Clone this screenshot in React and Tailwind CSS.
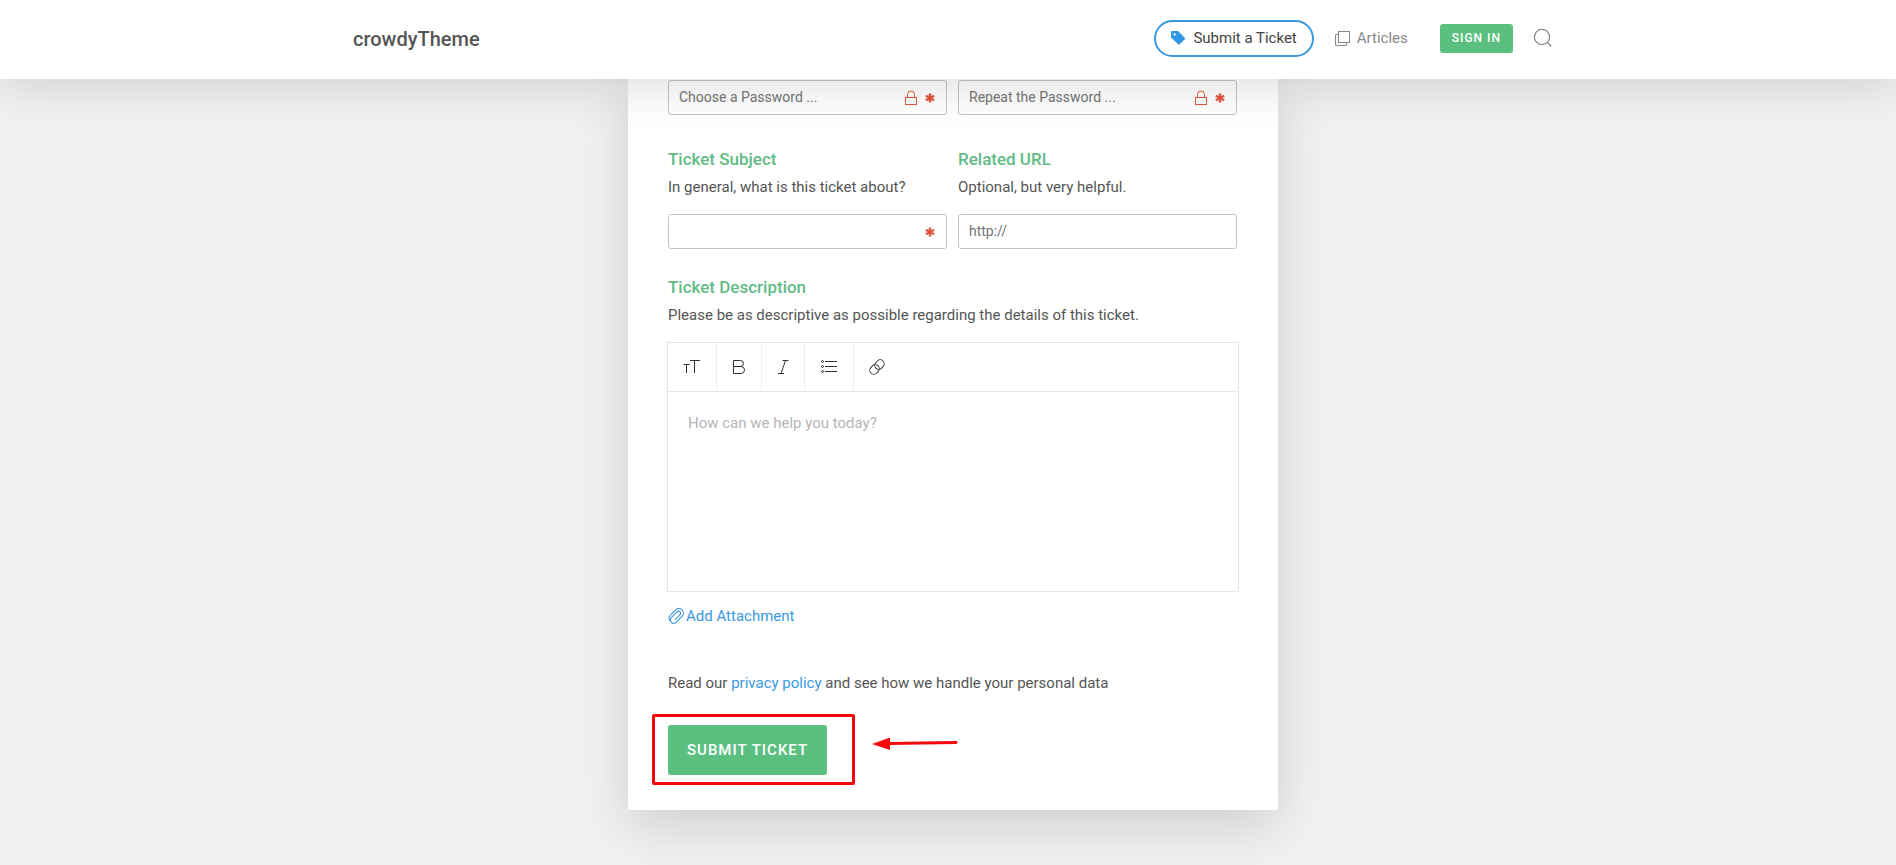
import { useState } from "react";

const inputClass =
  "w-full h-[35px] rounded-[3px] border border-[#c4c4c4] bg-transparent px-2.5 pb-0.5 text-sm text-[#555] placeholder:text-[#757575] outline-none focus:border-[#3a99e0]";

function Icon({ size = 20, className = "", children }) {
  return (
    <svg
      width={size}
      height={size}
      viewBox="0 0 20 20"
      fill="none"
      stroke="currentColor"
      className={`shrink-0 ${className}`}
      aria-hidden="true"
    >
      {children}
    </svg>
  );
}

function TagIcon() {
  return (
    <svg width="14" height="14" viewBox="0 0 14 14" className="shrink-0 text-[#2f97e6]" aria-hidden="true">
      <path
        fill="currentColor"
        fillRule="evenodd"
        d="M0 0.6Q0 0 .6 0H7l7 7a.7.7 0 0 1 0 .9L8.4 13.6a.7.7 0 0 1-.9 0L0 6.4ZM3.6 2.3a1.1 1.1 0 1 0 .01 0Z"
      />
    </svg>
  );
}

function ArticlesIcon() {
  return (
    <svg width="16" height="16" viewBox="0 0 16 16" fill="none" stroke="currentColor" className="shrink-0" aria-hidden="true">
      <rect x="4.5" y="1.5" width="11" height="11" />
      <path d="M4.5 4.5H1.5v11h11v-3" />
    </svg>
  );
}

function SearchIcon() {
  return (
    <Icon>
      <circle cx="9" cy="9" r="7.6" strokeWidth="1.3" />
      <path d="M14.3 14.3l4 4" strokeWidth="1.3" />
    </Icon>
  );
}

function LockIcon() {
  return (
    <svg width="14" height="16" viewBox="0 0 14 16" fill="none" stroke="currentColor" className="shrink-0" aria-hidden="true">
      <rect x="1.5" y="7.5" width="11" height="7" />
      <path d="M3.5 7.5V4.5a3.5 3.5 0 0 1 7 0v3" />
    </svg>
  );
}

function AsteriskIcon() {
  return (
    <svg width="10" height="10" viewBox="0 0 10 10" stroke="currentColor" strokeWidth="2.4" className="shrink-0" aria-hidden="true">
      <path d="M5 0.4v9.2M.9 2.7l8.2 4.6M.9 7.3l8.2-4.6" />
    </svg>
  );
}

function PaperclipIcon() {
  return (
    <Icon size={18}>
      <g transform="rotate(-45 10 10)" strokeWidth="1.2">
        <path d="M6 5h8.500a5 5 0 0 1 0 10H5a3.700 3.700 0 0 1 0-7.400h9a2.300 2.300 0 0 1 0 4.600H6.500" />
        <path d="M6 5a5 5 0 0 0-4.700 4.500" />
      </g>
    </Icon>
  );
}

function Field({ id, type = "text", label, placeholder, lock, required }) {
  return (
    <div className="relative">
      <input
        id={id}
        type={type}
        aria-label={label}
        placeholder={placeholder}
        required={required}
        className={inputClass}
      />
      <span className="pointer-events-none absolute inset-y-0 right-3 flex items-center gap-[7px] text-[#e0583a]">
        {lock && <LockIcon />}
        {required && <AsteriskIcon />}
      </span>
    </div>
  );
}

function FieldHeading({ htmlFor, title, hint }) {
  return (
    <div className="mb-[13px]">
      <label htmlFor={htmlFor} className="block text-[17px] leading-7 font-medium text-[#61bb85]">
        {title}
      </label>
      <p className="text-[15px] leading-7">{hint}</p>
    </div>
  );
}

const tools = [
  {
    name: "Text size",
    width: "w-[49px]",
    icon: <path d="M8 3.5h10M12.5 3.5V16M1.5 7.5h6M4.5 7.5V16" />,
  },
  {
    name: "Bold",
    width: "w-[45px]",
    icon: <path d="M4.5 3.5h7a3 3 0 0 1 0 6h-7zM4.5 9.5h7.5a3.5 3.5 0 0 1 0 7H4.5z" />,
  },
  {
    name: "Italic",
    width: "w-[43px]",
    icon: <path d="M9.5 3.5h6M5 16.5h6M12.5 3.5L8 16.5" />,
  },
  {
    name: "List",
    width: "w-[49px]",
    icon: (
      <>
        <path d="M6 4.5h12M6 9.5h12M6 14.5h12" />
        <circle cx="3.5" cy="4.5" r="1" />
        <circle cx="3.5" cy="9.5" r="1" />
        <circle cx="3.5" cy="14.5" r="1" />
      </>
    ),
  },
  {
    name: "Link",
    width: "w-[45px]",
    icon: (
      <g transform="rotate(-45 10 10)">
        <rect x="1.5" y="6" width="10" height="8" rx="4" />
        <rect x="8.5" y="6" width="10" height="8" rx="4" />
      </g>
    ),
  },
];

function Editor() {
  return (
    <div className="-mr-0.5 -ml-px border border-[#e6e6e6]">
      <div className="flex h-[49px] border-b border-[#e6e6e6] text-[#333]">
        {tools.map((tool) => (
          <button
            key={tool.name}
            type="button"
            aria-label={tool.name}
            className={`flex items-center justify-center border-r border-[#f0f0f0] pb-px last:border-r-0 hover:bg-gray-50 ${tool.width}`}
          >
            <Icon>{tool.icon}</Icon>
          </button>
        ))}
      </div>
      <textarea
        id="description"
        placeholder="How can we help you today?"
        className="block h-[199px] w-full resize-none px-5 py-[17px] text-[15px] leading-7 outline-none placeholder:text-[#b5b5b5]"
      />
    </div>
  );
}

function Header() {
  return (
    <header className="relative z-10 bg-white pl-2.5 shadow-[0_5px_50px_rgba(0,0,0,0.15)]">
      <div className="mx-auto flex h-[79px] max-w-[1200px] items-center justify-between">
        <a href="#" className="pb-0.5 text-xl font-medium text-[#555]">
          crowdyTheme
        </a>
        <nav className="flex items-center pb-[3px] text-[15px]">
          <a
            href="#submit"
            className="flex h-[37px] items-center gap-2 rounded-full border-2 border-[#3a99e0] px-[15px] text-[#444]"
          >
            <TagIcon />
            Submit a Ticket
          </a>
          <a href="#articles" className="ml-5 flex items-center gap-[7px] text-[#888]">
            <ArticlesIcon />
            Articles
          </a>
          <button
            type="button"
            className="ml-8 h-[29px] rounded-[3px] bg-[#5bc07f] px-3 text-xs font-medium tracking-[1px] text-white"
          >
            SIGN IN
          </button>
          <button type="button" aria-label="Search" className="ml-5 text-[#888]">
            <SearchIcon />
          </button>
        </nav>
      </div>
    </header>
  );
}

export default function App() {
  const [sent, setSent] = useState(false);

  const handleSubmit = (e) => {
    e.preventDefault();
    setSent(true);
  };

  return (
    <div className="min-h-screen bg-[#f1f1f1] font-[Roboto,sans-serif] text-[#555]">
      <Header />
      <main className="pb-[55px] pl-2.5">
        <form
          onSubmit={handleSubmit}
          noValidate
          className="mx-auto w-full max-w-[650px] bg-white px-10 pb-[35px] shadow-[0_15px_50px_rgba(0,0,0,0.15)]"
        >
          <div className="mr-px grid grid-cols-2 gap-x-[11px] pt-px">
            <Field id="password" type="password" label="Password" placeholder="Choose a Password ..." lock required />
            <Field id="repeat" type="password" label="Repeat password" placeholder="Repeat the Password ..." lock required />
          </div>

          <div className="mt-[30px] mr-px grid grid-cols-2 gap-x-[11px]">
            <div>
              <FieldHeading htmlFor="subject" title="Ticket Subject" hint="In general, what is this ticket about?" />
              <Field id="subject" label="Ticket Subject" required />
            </div>
            <div>
              <FieldHeading htmlFor="url" title="Related URL" hint="Optional, but very helpful." />
              <Field id="url" label="Related URL" placeholder="http://" />
            </div>
          </div>

          <div className="mt-6 mr-px">
            <FieldHeading
              htmlFor="description"
              title="Ticket Description"
              hint="Please be as descriptive as possible regarding the details of this ticket."
            />
            <Editor />
          </div>

          <button type="button" className="mt-3 -ml-px flex items-center gap-px text-[15px] leading-6 text-[#3a99e0]">
            <PaperclipIcon />
            Add Attachment
          </button>

          <p className="mt-[43px] text-[15px] leading-6">
            Read our{" "}
            <a href="#privacy" className="text-[#3a99e0]">
              privacy policy
            </a>{" "}
            and see how we handle your personal data
          </p>

          <div className="relative mt-[30px] w-fit">
            <button
              type="submit"
              disabled={sent}
              className="h-[50px] rounded-[3px] bg-[#5bc07f] px-[19px] text-[15px] font-medium tracking-[1px] text-white"
            >
              SUBMIT TICKET
            </button>
            <span className="pointer-events-none absolute -top-[11px] -right-7 -bottom-[10px] -left-4 rounded-xs border-3 border-[#f5070b]" />
            <svg
              width="86"
              height="16"
              viewBox="0 0 86 16"
              className="pointer-events-none absolute top-3 left-[204px]"
              aria-hidden="true"
            >
              <path d="M16 6.5L84 5.5" stroke="#f5070b" strokeWidth="3" strokeLinecap="round" />
              <path d="M0 7L18 .5V13Z" fill="#f5070b" />
            </svg>
          </div>
        </form>
      </main>
    </div>
  );
}
